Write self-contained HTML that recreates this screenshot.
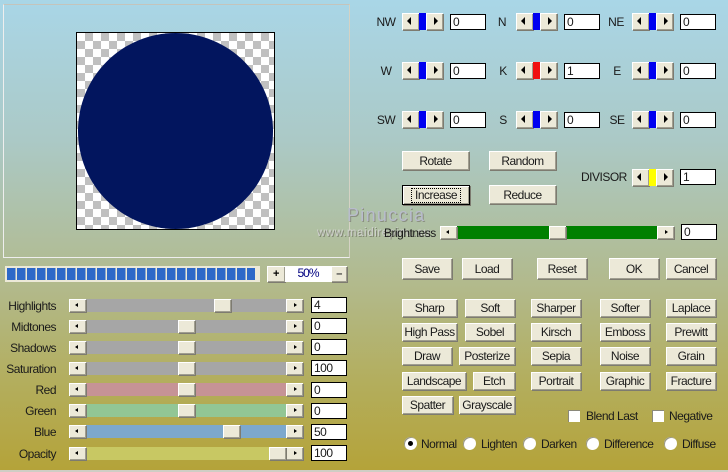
<!DOCTYPE html>
<html><head><meta charset="utf-8"><style>
html,body{margin:0;padding:0}
#p{position:relative;width:728px;height:472px;overflow:hidden;font:12px/1 "Liberation Sans",sans-serif;letter-spacing:-.5px;color:#1a1a1a;background:linear-gradient(#a9d6e7 0,#abc9c6 140px,#b2b98a 290px,#b3ae5e 380px,#b4a339 470px)}
#p div{position:absolute;box-sizing:border-box;white-space:nowrap}
.b{background:#ece9d8;box-shadow:inset 1px 1px 0 #fff,inset -1px -1px 0 #a09e90,1px 1px 0 #7d7b70;text-align:center}
.t{line-height:18px;height:18px}
.i{background:#fff;border:1px solid #000;padding-left:2px;line-height:14px;width:36px;height:16px;font-size:12px}
.l,.r{width:17px;height:13px}
.l:before,.r:before{content:"";position:absolute;top:4px;border:3px solid transparent;border-top-width:2.5px;border-bottom-width:2.5px}
.l:before{left:6px;border-left:0;border-right:3px solid #000}
.r:before{left:8px;border-right:0;border-left:3px solid #000}
.tk{height:13px;left:85px;width:202px}
.h{width:17px;height:13px}
.sl,.sr{width:17px;height:17px}
.sl:before,.sr:before{content:"";position:absolute;top:4px;border:4px solid transparent}
.sl:before{left:5px;border-left:0;border-right:4px solid #000}
.sr:before{left:8px;border-right:0;border-left:4px solid #000}
.th{width:7px;height:17px}
.lb{width:60px;left:-4px;text-align:right;line-height:18px;height:18px}
.f{height:18px;line-height:19px}
.c{width:12px;height:12px;background:#fff;box-shadow:inset 1px 1px 0 #8a887a}
.o{width:13px;height:13px;border-radius:50%;background:#fff;box-shadow:inset 1px 1px 0 #9a9880}
</style></head><body><div id="p">
<div style="left:3px;top:4px;width:347px;height:254px;border:1px solid #eee;border-top-color:#c4c4bc;border-right-color:#d4d2c4"></div>
<div style="left:76px;top:32px;width:199px;height:198px;border:1px solid #000;background:repeating-conic-gradient(#c0c0c0 0 25%,#fff 0 50%) 0 0/16px 16px"></div>
<div style="left:78px;top:33px;width:195px;height:196px;border-radius:50%;background:#02155e"></div>

<div style="left:5px;top:266px;width:255px;height:16px;background:#ece9d8"></div>
<div style="left:7px;top:268px;width:248px;height:12px;background:repeating-linear-gradient(90deg,#2d68c8 0,#2d68c8 8.7px,#ece9d8 8.7px,#ece9d8 10px)"></div>
<div class="b" style="left:267px;top:266px;width:18px;height:16px;font:bold 11px/16px 'Liberation Sans',sans-serif;color:#000">+</div>
<div style="left:285px;top:266px;width:46px;height:16px;background:#fff;color:#000080;text-align:center;font-size:12px;line-height:15px;letter-spacing:-1px">50%</div>
<div class="b" style="left:331px;top:266px;width:16px;height:16px;font:bold 11px/16px 'Liberation Sans',sans-serif;color:#333">–</div>

<div class="lb" style="top:297px">Highlights</div>
<div class="lb" style="top:318px">Midtones</div>
<div class="lb" style="top:339px">Shadows</div>
<div class="lb" style="top:360px">Saturation</div>
<div class="lb" style="top:381px">Red</div>
<div class="lb" style="top:402px">Green</div>
<div class="lb" style="top:423px">Blue</div>
<div class="lb" style="top:445px">Opacity</div>

<div class="tk" style="top:299px;background:#a6a6a6"></div><div class="b l" style="left:69px;top:299px"></div><div class="b r" style="left:286px;top:299px"></div><div class="b h" style="left:214px;top:299px"></div>
<div class="tk" style="top:320px;background:#a6a6a6"></div><div class="b l" style="left:69px;top:320px"></div><div class="b r" style="left:286px;top:320px"></div><div class="b h" style="left:178px;top:320px"></div>
<div class="tk" style="top:341px;background:#a6a6a6"></div><div class="b l" style="left:69px;top:341px"></div><div class="b r" style="left:286px;top:341px"></div><div class="b h" style="left:178px;top:341px"></div>
<div class="tk" style="top:362px;background:#a6a6a6"></div><div class="b l" style="left:69px;top:362px"></div><div class="b r" style="left:286px;top:362px"></div><div class="b h" style="left:178px;top:362px"></div>
<div class="tk" style="top:383px;background:#c69396"></div><div class="b l" style="left:69px;top:383px"></div><div class="b r" style="left:286px;top:383px"></div><div class="b h" style="left:178px;top:383px"></div>
<div class="tk" style="top:404px;background:#92c695"></div><div class="b l" style="left:69px;top:404px"></div><div class="b r" style="left:286px;top:404px"></div><div class="b h" style="left:178px;top:404px"></div>
<div class="tk" style="top:425px;background:#7da8cc"></div><div class="b l" style="left:69px;top:425px"></div><div class="b r" style="left:286px;top:425px"></div><div class="b h" style="left:223px;top:425px"></div>
<div class="tk" style="top:447px;background:#c8c863"></div><div class="b l" style="left:69px;top:447px"></div><div class="b r" style="left:286px;top:447px"></div><div class="b h" style="left:269px;top:447px"></div>

<div class="i" style="left:311px;top:297px">4</div>
<div class="i" style="left:311px;top:318px">0</div>
<div class="i" style="left:311px;top:339px">0</div>
<div class="i" style="left:311px;top:360px">100</div>
<div class="i" style="left:311px;top:382px">0</div>
<div class="i" style="left:311px;top:403px">0</div>
<div class="i" style="left:311px;top:424px">50</div>
<div class="i" style="left:311px;top:445px">100</div>

<div class="t" style="left:366px;top:13px;width:40px;text-align:center">NW</div>
<div class="b sl" style="left:402px;top:13px"></div><div class="th" style="left:419px;top:13px;background:#0000f0"></div><div class="b sr" style="left:426px;top:13px"></div><div class="i" style="left:450px;top:14px">0</div>
<div class="t" style="left:482px;top:13px;width:40px;text-align:center">N</div>
<div class="b sl" style="left:516px;top:13px"></div><div class="th" style="left:533px;top:13px;background:#0000f0"></div><div class="b sr" style="left:540px;top:13px"></div><div class="i" style="left:564px;top:14px">0</div>
<div class="t" style="left:596px;top:13px;width:40px;text-align:center">NE</div>
<div class="b sl" style="left:632px;top:13px"></div><div class="th" style="left:649px;top:13px;background:#0000f0"></div><div class="b sr" style="left:656px;top:13px"></div><div class="i" style="left:680px;top:14px">0</div>

<div class="t" style="left:366px;top:62px;width:40px;text-align:center">W</div>
<div class="b sl" style="left:402px;top:62px"></div><div class="th" style="left:419px;top:62px;background:#0000f0"></div><div class="b sr" style="left:426px;top:62px"></div><div class="i" style="left:450px;top:63px">0</div>
<div class="t" style="left:483px;top:62px;width:40px;text-align:center">K</div>
<div class="b sl" style="left:516px;top:62px"></div><div class="th" style="left:533px;top:62px;background:#f01010"></div><div class="b sr" style="left:540px;top:62px"></div><div class="i" style="left:564px;top:63px">1</div>
<div class="t" style="left:597px;top:62px;width:40px;text-align:center">E</div>
<div class="b sl" style="left:632px;top:62px"></div><div class="th" style="left:649px;top:62px;background:#0000f0"></div><div class="b sr" style="left:656px;top:62px"></div><div class="i" style="left:680px;top:63px">0</div>

<div class="t" style="left:366px;top:111px;width:40px;text-align:center">SW</div>
<div class="b sl" style="left:402px;top:111px"></div><div class="th" style="left:419px;top:111px;background:#0000f0"></div><div class="b sr" style="left:426px;top:111px"></div><div class="i" style="left:450px;top:112px">0</div>
<div class="t" style="left:483px;top:111px;width:40px;text-align:center">S</div>
<div class="b sl" style="left:516px;top:111px"></div><div class="th" style="left:533px;top:111px;background:#0000f0"></div><div class="b sr" style="left:540px;top:111px"></div><div class="i" style="left:564px;top:112px">0</div>
<div class="t" style="left:597px;top:111px;width:40px;text-align:center">SE</div>
<div class="b sl" style="left:632px;top:111px"></div><div class="th" style="left:649px;top:111px;background:#0000f0"></div><div class="b sr" style="left:656px;top:111px"></div><div class="i" style="left:680px;top:112px">0</div>

<div class="b" style="left:402px;top:151px;width:67px;height:19px;line-height:20px">Rotate</div>
<div class="b" style="left:489px;top:151px;width:67px;height:19px;line-height:20px">Random</div>
<div class="b" style="left:402px;top:185px;width:68px;height:20px;line-height:19px;border:1px solid #000"><span style="border:1px dotted #000;padding:0 3px;line-height:13px;display:inline-block;margin-top:1px">Increase</span></div>
<div class="b" style="left:489px;top:185px;width:67px;height:19px;line-height:20px">Reduce</div>
<div class="t" style="left:581px;top:168px">DIVISOR</div>
<div class="b sl" style="left:632px;top:169px"></div><div class="th" style="left:649px;top:169px;background:#ffff00"></div><div class="b sr" style="left:656px;top:169px"></div><div class="i" style="left:680px;top:169px">1</div>

<div style="left:347px;top:205px;font-size:18px;line-height:20px;letter-spacing:1.3px;color:#b8bccc;text-shadow:1px 1px 0 #8a8e80">Pinuccia</div>
<div style="left:317px;top:226px;font-size:11.5px;line-height:14px;letter-spacing:.6px;color:#cfd1cd;text-shadow:1px 1px 0 #7e8270">www.maidirepinu.su</div>
<div class="t" style="left:384px;top:224px">Brightness</div>
<div style="left:440px;top:226px;width:234px;height:13px;background:#008000"></div>
<div class="b l" style="left:440px;top:226px"></div><div class="b r" style="left:657px;top:226px"></div><div class="b h" style="left:549px;top:226px"></div>
<div class="i" style="left:681px;top:224px">0</div>

<div class="b" style="left:402px;top:258px;width:50px;height:21px;line-height:23px">Save</div>
<div class="b" style="left:462px;top:258px;width:50px;height:21px;line-height:23px">Load</div>
<div class="b" style="left:537px;top:258px;width:50px;height:21px;line-height:23px">Reset</div>
<div class="b" style="left:609px;top:258px;width:50px;height:21px;line-height:23px">OK</div>
<div class="b" style="left:666px;top:258px;width:50px;height:21px;line-height:23px">Cancel</div>

<div class="b f" style="left:402px;top:299px;width:55px">Sharp</div>
<div class="b f" style="left:465px;top:299px;width:50px">Soft</div>
<div class="b f" style="left:531px;top:299px;width:50px">Sharper</div>
<div class="b f" style="left:600px;top:299px;width:50px">Softer</div>
<div class="b f" style="left:666px;top:299px;width:50px">Laplace</div>

<div class="b f" style="left:402px;top:323px;width:55px">High Pass</div>
<div class="b f" style="left:465px;top:323px;width:50px">Sobel</div>
<div class="b f" style="left:531px;top:323px;width:50px">Kirsch</div>
<div class="b f" style="left:600px;top:323px;width:50px">Emboss</div>
<div class="b f" style="left:666px;top:323px;width:50px">Prewitt</div>

<div class="b f" style="left:402px;top:347px;width:50px">Draw</div>
<div class="b f" style="left:459px;top:347px;width:56px">Posterize</div>
<div class="b f" style="left:531px;top:347px;width:50px">Sepia</div>
<div class="b f" style="left:600px;top:347px;width:50px">Noise</div>
<div class="b f" style="left:666px;top:347px;width:50px">Grain</div>

<div class="b f" style="left:402px;top:372px;width:64px">Landscape</div>
<div class="b f" style="left:473px;top:372px;width:42px">Etch</div>
<div class="b f" style="left:531px;top:372px;width:50px">Portrait</div>
<div class="b f" style="left:600px;top:372px;width:50px">Graphic</div>
<div class="b f" style="left:666px;top:372px;width:50px">Fracture</div>

<div class="b f" style="left:402px;top:396px;width:51px">Spatter</div>
<div class="b f" style="left:459px;top:396px;width:56px">Grayscale</div>

<div class="c" style="left:568px;top:410px"></div><div class="t" style="left:586px;top:407px">Blend Last</div>
<div class="c" style="left:652px;top:410px"></div><div class="t" style="left:669px;top:407px">Negative</div>

<div class="o" style="left:404px;top:437px"></div><div style="left:408px;top:441px;width:5px;height:5px;border-radius:50%;background:#000"></div><div class="t" style="left:421px;top:435px">Normal</div>
<div class="o" style="left:463px;top:437px"></div><div class="t" style="left:481px;top:435px">Lighten</div>
<div class="o" style="left:523px;top:437px"></div><div class="t" style="left:541px;top:435px">Darken</div>
<div class="o" style="left:586px;top:437px"></div><div class="t" style="left:604px;top:435px">Difference</div>
<div class="o" style="left:664px;top:437px"></div><div class="t" style="left:682px;top:435px">Diffuse</div>

<div style="left:0;top:470px;width:728px;height:2px;background:#cfcdc4"></div>
</div></body></html>
